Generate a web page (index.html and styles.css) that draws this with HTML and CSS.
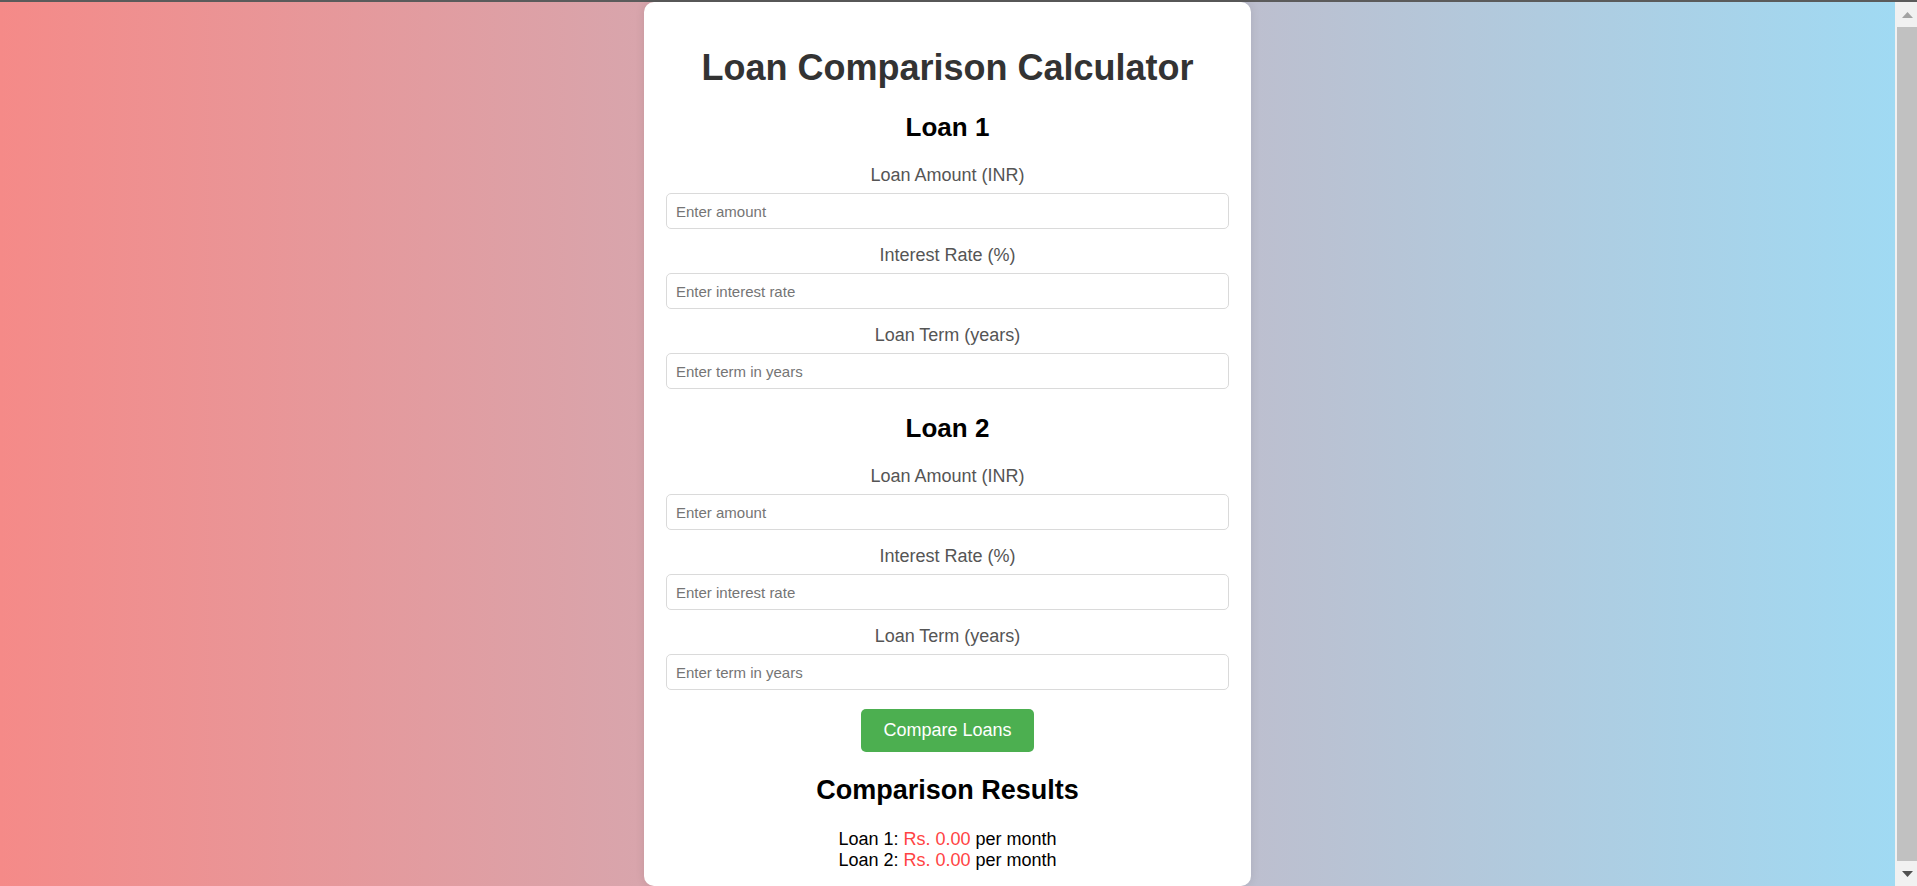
FILE: index.html
```html
<!DOCTYPE html>
<html lang="en">
<head>
<meta charset="utf-8">
<title>Loan Comparison Calculator</title>
<link rel="stylesheet" href="styles.css">
</head>
<body>
<div class="topbar"></div>
<div class="main">
  <div class="page">
    <div class="card">
      <h1 class="title">Loan Comparison Calculator</h1>

      <section class="loan">
        <h2 class="loan-title">Loan 1</h2>
        <label class="field-label">Loan Amount (INR)</label>
        <input class="field" type="text" placeholder="Enter amount">
        <label class="field-label">Interest Rate (%)</label>
        <input class="field" type="text" placeholder="Enter interest rate">
        <label class="field-label">Loan Term (years)</label>
        <input class="field" type="text" placeholder="Enter term in years">
      </section>

      <section class="loan">
        <h2 class="loan-title">Loan 2</h2>
        <label class="field-label">Loan Amount (INR)</label>
        <input class="field" type="text" placeholder="Enter amount">
        <label class="field-label">Interest Rate (%)</label>
        <input class="field" type="text" placeholder="Enter interest rate">
        <label class="field-label">Loan Term (years)</label>
        <input class="field" type="text" placeholder="Enter term in years">
      </section>

      <button class="compare-btn" type="button">Compare Loans</button>

      <h3 class="results-title">Comparison Results</h3>
      <div class="results">
        <div class="result-line">Loan 1: <span class="amount">Rs. 0.00</span> per month</div>
        <div class="result-line">Loan 2: <span class="amount">Rs. 0.00</span> per month</div>
      </div>
    </div>
  </div>
  <div class="scrollbar">
    <div class="sb-btn">
      <svg width="11" height="6" viewBox="0 0 11 6"><polygon points="0,6 11,6 5.5,0" fill="#a3a3a3"/></svg>
    </div>
    <div class="sb-thumb"></div>
    <div class="sb-btn">
      <svg width="11" height="6" viewBox="0 0 11 6"><polygon points="0,0 11,0 5.5,6" fill="#505050"/></svg>
    </div>
  </div>
</div>
</body>
</html>
```

FILE: styles.css
```css
* {
  box-sizing: border-box;
}

html, body {
  margin: 0;
  padding: 0;
  height: 886px;
  overflow: hidden;
}

body {
  font-family: "Liberation Sans", Arial, sans-serif;
  display: flex;
  flex-direction: column;
}

.topbar {
  height: 2px;
  background: #5b5b5b;
  flex: none;
}

.main {
  flex: 1;
  display: flex;
  min-height: 0;
}

.page {
  flex: 1;
  display: flex;
  justify-content: center;
  align-items: flex-start;
  background: linear-gradient(to right, #f58a88, #a0daf3);
}

.card {
  width: 607px;
  background: #ffffff;
  border-radius: 10px;
  box-shadow: 0 0 10px rgba(0, 0, 0, 0.1);
  padding: 21px 22px 15px;
  text-align: center;
}

.title {
  font-size: 36px;
  line-height: 41px;
  font-weight: bold;
  color: #333333;
  margin: 24px 0 24px;
}

.loan-title {
  font-size: 26px;
  line-height: 30px;
  font-weight: bold;
  color: #000000;
  margin: 24px 0 23px;
}

.field-label {
  display: block;
  font-size: 18px;
  line-height: 21px;
  color: #555555;
  margin-bottom: 7px;
}

.field {
  display: block;
  width: 100%;
  height: 36px;
  margin: 0 0 16px;
  padding: 0 9px;
  border: 1px solid #dadada;
  border-radius: 5px;
  font-family: "Liberation Sans", Arial, sans-serif;
  font-size: 15px;
  color: #333;
  background: #fff;
  outline: none;
}

.field::placeholder {
  color: #757575;
}

.compare-btn {
  display: block;
  margin: 19px auto 0;
  height: 43px;
  padding: 0 22px;
  border: none;
  border-radius: 5px;
  background: #4caf50;
  color: #ffffff;
  font-family: "Liberation Sans", Arial, sans-serif;
  font-size: 18px;
  line-height: 21px;
  cursor: pointer;
}

.results-title {
  font-size: 27px;
  line-height: 31px;
  font-weight: bold;
  color: #000000;
  margin: 23px 0 23px;
}

.results {
  font-size: 18px;
  line-height: 21px;
  color: #000000;
}

.amount {
  color: #ff4444;
}

.scrollbar {
  width: 22px;
  flex: none;
  display: flex;
  flex-direction: column;
  background: #f1f1f1;
  padding-left: 2px;
}

.sb-btn {
  height: 25px;
  display: flex;
  align-items: center;
  justify-content: center;
  flex: none;
}

.sb-thumb {
  flex: 1;
  background: #c1c1c1;
}
```
